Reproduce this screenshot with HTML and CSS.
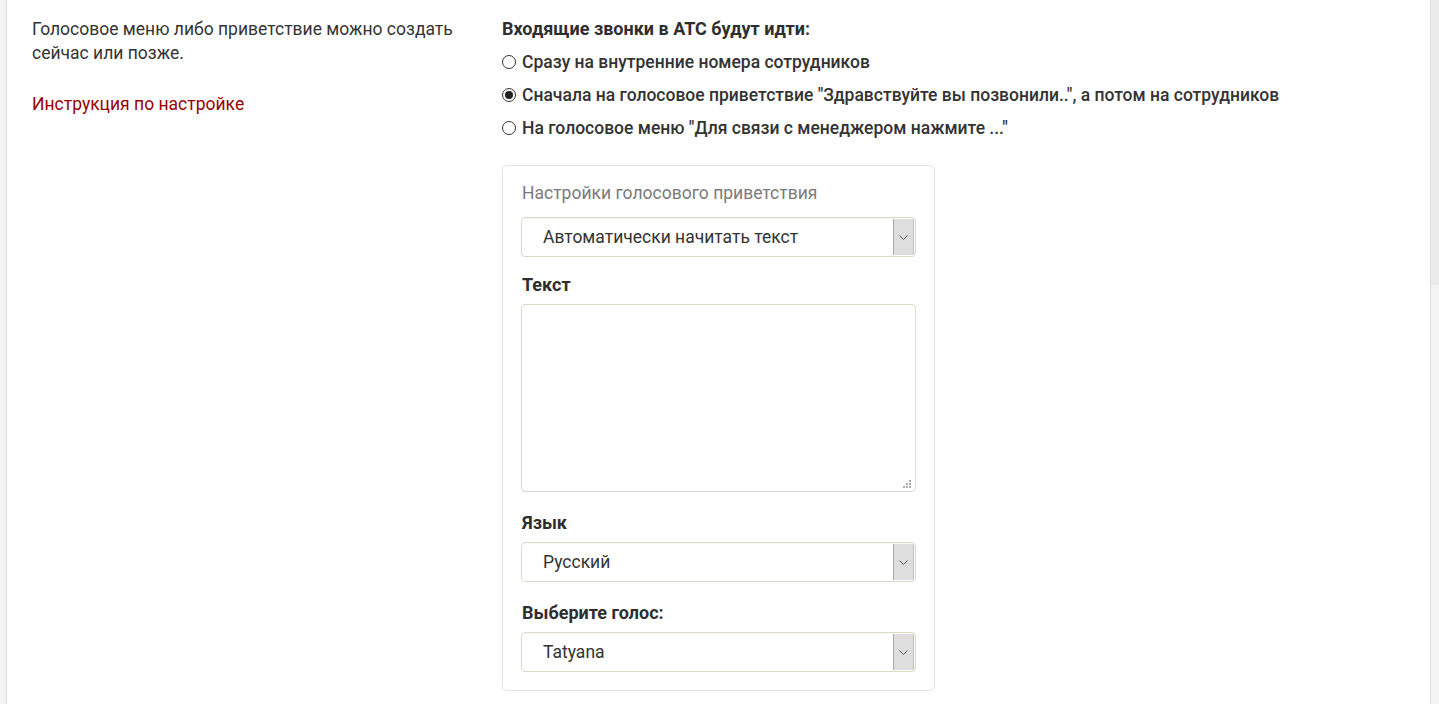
FILE: index.html
```html
<!DOCTYPE html>
<html lang="ru">
<head>
<meta charset="utf-8">
<title>Настройки АТС</title>
<link rel="stylesheet" href="styles.css">
</head>
<body>
<div class="gutter-left"></div>
<main class="page">
  <section class="col-info">
    <p class="info-text">Голосовое меню либо приветствие можно создать сейчас или позже.</p>
    <a class="info-link" href="#">Инструкция по настройке</a>
  </section>
  <section class="col-form">
    <h3 class="form-title">Входящие звонки в АТС будут идти:</h3>
    <div class="radio-list">
      <label class="radio-row"><span class="radio"></span>Сразу на внутренние номера сотрудников</label>
      <label class="radio-row"><span class="radio checked"></span>Сначала на голосовое приветствие "Здравствуйте вы позвонили..", а потом на сотрудников</label>
      <label class="radio-row"><span class="radio"></span>На голосовое меню "Для связи с менеджером нажмите ..."</label>
    </div>
    <div class="card">
      <div class="card-title">Настройки голосового приветствия</div>
      <div class="select">
        <span class="select-value">Автоматически начитать текст</span>
        <span class="select-btn"><svg width="9" height="5" viewBox="0 0 9 5"><path d="M0.5 0.5 L4.5 4.5 L8.5 0.5" fill="none" stroke="#555" stroke-width="1"/></svg></span>
      </div>
      <div class="label label-text">Текст</div>
      <div class="textarea">
        <svg class="resize" width="8" height="8" viewBox="0 0 8 8"><rect x="6" y="0" width="2" height="2" fill="#aaa"/><rect x="3" y="3" width="2" height="2" fill="#aaa"/><rect x="6" y="3" width="2" height="2" fill="#aaa"/><rect x="0" y="6" width="2" height="2" fill="#aaa"/><rect x="3" y="6" width="2" height="2" fill="#aaa"/><rect x="6" y="6" width="2" height="2" fill="#aaa"/></svg>
      </div>
      <div class="label label-lang">Язык</div>
      <div class="select">
        <span class="select-value">Русский</span>
        <span class="select-btn"><svg width="9" height="5" viewBox="0 0 9 5"><path d="M0.5 0.5 L4.5 4.5 L8.5 0.5" fill="none" stroke="#555" stroke-width="1"/></svg></span>
      </div>
      <div class="label label-voice">Выберите голос:</div>
      <div class="select">
        <span class="select-value">Tatyana</span>
        <span class="select-btn"><svg width="9" height="5" viewBox="0 0 9 5"><path d="M0.5 0.5 L4.5 4.5 L8.5 0.5" fill="none" stroke="#555" stroke-width="1"/></svg></span>
      </div>
    </div>
  </section>
</main>
<div class="gutter-right"><div class="thumb"></div></div>
</body>
</html>
```

FILE: styles.css
```css
* { box-sizing: border-box; }
html, body { margin: 0; padding: 0; height: 100%; }
body {
  display: flex;
  background: #f3f3f3;
  font-family: Roboto, "Noto Sans", Arial, sans-serif;
  font-size: 17.5px;
  line-height: 24px;
  color: #333;
  overflow: hidden;
}
.gutter-left { width: 6px; flex: none; background: #f3f3f3; }
.gutter-right { width: 8px; flex: none; background: #f3f3f3; }
.thumb { height: 285px; background: #ebebeb; }
.page {
  width: 1425px;
  flex: none;
  background: #fff;
  border-left: 1px solid #dcdcdc;
  border-right: 1px solid #dcdcdc;
  display: grid;
  grid-template-columns: 440px 1fr;
  column-gap: 30px;
  padding: 17px 25px 0 25px;
  align-items: start;
}
.info-text { margin: 0; }
.info-link {
  display: block;
  margin-top: 27px;
  color: #990000;
  text-decoration: none;
}
.form-title {
  margin: 0;
  font-size: 18px;
  line-height: 24px;
  font-weight: 700;
  color: #2e2e2e;
}
.radio-list {
  margin-top: 4px;
  display: flex;
  flex-direction: column;
}
.radio-row {
  display: flex;
  align-items: center;
  height: 33px;
  font-weight: 500;
}
.radio {
  width: 14px;
  height: 14px;
  border: 1px solid #333;
  border-radius: 50%;
  margin-right: 6px;
  flex: none;
  display: flex;
  align-items: center;
  justify-content: center;
  background: #fff;
}
.radio.checked::after {
  content: "";
  width: 8px;
  height: 8px;
  border-radius: 50%;
  background: #222;
}
.card {
  margin-top: 21px;
  width: 433px;
  border: 1px solid #e4e4e4;
  border-radius: 5px;
  padding: 15px 18px 18px 18px;
}
.card-title { color: #7a7a7a; padding-left: 1px; }
.select {
  margin-top: 12px;
  height: 40px;
  border: 1px solid #e0d7ca;
  border-radius: 4px;
  display: flex;
  align-items: stretch;
  padding: 1px 1px 1px 0;
  box-shadow: inset 0 1px 1px rgba(0,0,0,0.03);
}
.select-value {
  flex: 1;
  display: flex;
  align-items: center;
  padding-left: 21px;
  color: #333;
}
.select-btn {
  width: 21px;
  background: #dedede;
  border-left: 1px solid #a8a8a8;
  border-right: 1px solid #bdbdbd;
  display: flex;
  align-items: center;
  justify-content: center;
  border-radius: 0 2px 2px 0;
}
.label { font-weight: 700; font-size: 18px; padding-left: 1px; color: #2e2e2e; }
.label-text { margin-top: 16px; }
.label-lang, .label-voice { margin-top: 19px; }
.label + .select { margin-top: 7px; }
.textarea {
  position: relative;
  margin-top: 7px;
  height: 188px;
  border: 1px solid #e0d7ca;
  border-radius: 4px;
}
.resize { position: absolute; right: 4px; bottom: 3px; }
```
